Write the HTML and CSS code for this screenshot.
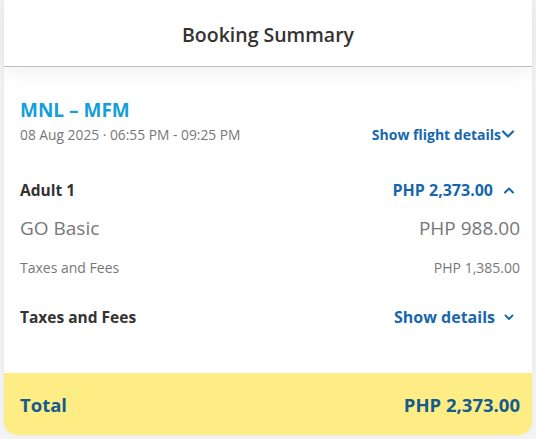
FILE: index.html
```html
<!DOCTYPE html>
<html>
<head>
<meta charset="utf-8">
<link rel="stylesheet" href="styles.css">
</head>
<body>
<div class="page">
  <div class="modal">
    <div class="header">Booking Summary</div>
    <div class="content">
      <div class="flight">
        <div class="route">MNL – MFM</div>
        <div class="date-row">
          <span class="date">08 Aug 2025 · 06:55 PM - 09:25 PM</span>
          <span class="link link-sm">Show flight details<svg class="chev-lg" viewBox="0 0 12 8"><polyline points="1,1.5 6,6.5 11,1.5"/></svg></span>
        </div>
      </div>
      <div class="row row-adult">
        <span class="label-bold">Adult 1</span>
        <span class="link">PHP 2,373.00<svg class="chev-sm" viewBox="0 0 10 7"><polyline points="1,5.5 5,1.5 9,5.5"/></svg></span>
      </div>
      <div class="row row-fare">
        <span>GO Basic</span>
        <span>PHP 988.00</span>
      </div>
      <div class="row row-tax">
        <span>Taxes and Fees</span>
        <span>PHP 1,385.00</span>
      </div>
      <div class="row row-taxes">
        <span class="label-bold">Taxes and Fees</span>
        <span class="link link-semi">Show details<svg class="chev-xs" viewBox="0 0 10 7"><polyline points="1.5,1.5 5,5 8.5,1.5"/></svg></span>
      </div>
    </div>
    <div class="footer">
      <span>Total</span>
      <span>PHP 2,373.00</span>
    </div>
  </div>
</div>
</body>
</html>
```

FILE: styles.css
```css
* { box-sizing: border-box; }
html, body {
  margin: 0;
  padding: 0;
  background: #f4f4f4;
  font-family: "Open Sans", "Noto Sans", sans-serif;
}
.page {
  width: 536px;
  height: 439px;
  padding: 0 4px;
  overflow: hidden;
}
.modal {
  width: 528px;
  background: #fff;
  border-radius: 0 0 14px 14px;
  box-shadow: 0 0 6px rgba(0,0,0,0.06);
}
.header {
  position: relative;
  z-index: 1;
  height: 67px;
  border-bottom: 1px solid #bcbcbc;
  background: #fff;
  display: flex;
  align-items: center;
  justify-content: center;
  padding-top: 2px;
  font-size: 19.5px;
  font-weight: 600;
  color: #333;
  box-shadow: 0 6px 18px rgba(0,0,0,0.06);
}
.content {
  padding: 0 12px 0 16px;
}
.flight {
  padding-top: 31px;
}
.route {
  height: 25px;
  line-height: 25px;
  font-size: 19px;
  font-weight: 700;
  color: #159fd9;
}
.date-row {
  height: 22px;
  display: flex;
  justify-content: space-between;
  align-items: center;
  padding-right: 6px;
}
.date {
  font-size: 13.8px;
  color: #777;
}
.link {
  display: flex;
  align-items: center;
  color: #1767ad;
  font-weight: 700;
  font-size: 16px;
}
.link-sm { font-size: 14px; }
.link svg {
  fill: none;
  stroke: #1767ad;
  stroke-linecap: round;
  stroke-linejoin: round;
}
.chev-lg { width: 12px; height: 8px; margin-left: 1px; stroke-width: 2.2; }
.chev-sm { width: 10px; height: 7px; margin-left: 11px; margin-right: 6px; stroke-width: 2; }
.chev-xs { width: 10px; height: 7px; margin-left: 9px; margin-right: 6px; stroke-width: 1.8; }
.row {
  display: flex;
  justify-content: space-between;
  align-items: center;
}
.label-bold {
  font-size: 15.5px;
  font-weight: 700;
  color: #333;
}
.row-adult {
  margin-top: 31px;
  height: 28px;
}
.row-fare {
  height: 48px;
  font-size: 19px;
  color: #777;
}
.row-tax {
  height: 30px;
  font-size: 14px;
  color: #777;
}
.row-taxes {
  height: 70px;
}
.footer {
  margin-top: 21px;
  height: 62px;
  background: #feed84;
  border-radius: 0 0 14px 14px;
  display: flex;
  justify-content: space-between;
  align-items: center;
  padding: 0 12px 0 16px;
  font-size: 18.5px;
  font-weight: 700;
  color: #175a8c;
}
```
